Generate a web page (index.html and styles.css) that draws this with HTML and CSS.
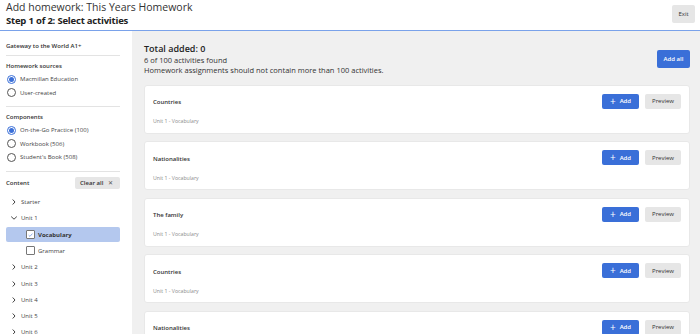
FILE: index.html
```html
<!DOCTYPE html>
<html>
<head>
<meta charset="utf-8">
<link rel="stylesheet" href="styles.css">
</head>
<body>
<header class="top">
  <div class="titles">
    <div class="t1">Add homework: This Years Homework</div>
    <div class="t2">Step 1 of 2: Select activities</div>
  </div>
  <button class="btn-grey exit">Exit</button>
</header>
<div class="layout">
  <aside class="side">
    <div class="course">Gateway to the World A1+</div>
    <div class="group">
      <div class="gtitle">Homework sources</div>
      <label class="radio on"><span class="dot"></span>Macmillan Education</label>
      <label class="radio"><span class="dot"></span>User-created</label>
    </div>
    <div class="group">
      <div class="gtitle">Components</div>
      <label class="radio on"><span class="dot"></span>On-the-Go Practice (100)</label>
      <label class="radio"><span class="dot"></span>Workbook (506)</label>
      <label class="radio"><span class="dot"></span>Student's Book (508)</label>
    </div>
    <div class="content-head">
      <div class="gtitle">Content</div>
      <button class="btn-grey clear">Clear all <span class="x">✕</span></button>
    </div>
    <ul class="tree">
      <li class="node"><svg class="chev" viewBox="0 0 8 8"><path d="M2.7 1.5 5 4 2.7 6.5" /></svg>Starter</li>
      <li class="node"><svg class="chev" viewBox="0 0 8 8"><path d="M1.2 2.6 4 5.2 6.8 2.6" /></svg>Unit 1</li>
      <li class="leaf sel"><span class="cb on"><svg viewBox="0 0 10 10"><path d="M2.3 5.2 4.2 7 7.8 3" /></svg></span>Vocabulary</li>
      <li class="leaf"><span class="cb"></span>Grammar</li>
      <li class="node"><svg class="chev" viewBox="0 0 8 8"><path d="M2.7 1.5 5 4 2.7 6.5" /></svg>Unit 2</li>
      <li class="node"><svg class="chev" viewBox="0 0 8 8"><path d="M2.7 1.5 5 4 2.7 6.5" /></svg>Unit 3</li>
      <li class="node"><svg class="chev" viewBox="0 0 8 8"><path d="M2.7 1.5 5 4 2.7 6.5" /></svg>Unit 4</li>
      <li class="node"><svg class="chev" viewBox="0 0 8 8"><path d="M2.7 1.5 5 4 2.7 6.5" /></svg>Unit 5</li>
      <li class="node"><svg class="chev" viewBox="0 0 8 8"><path d="M2.7 1.5 5 4 2.7 6.5" /></svg>Unit 6</li>
    </ul>
  </aside>
  <main class="main">
    <div class="summary">
      <div>
        <div class="total">Total added: 0</div>
        <div class="info">6 of 100 activities found</div>
        <div class="info">Homework assignments should not contain more than 100 activities.</div>
      </div>
      <button class="btn-blue addall">Add all</button>
    </div>
    <div class="cards">
      <div class="card"><div class="ctext"><div class="ctitle">Countries</div><div class="csub">Unit 1 - Vocabulary</div></div><div class="acts"><button class="btn-blue add"><span class="plus">+</span>Add</button><button class="btn-grey prev">Preview</button></div></div>
      <div class="card"><div class="ctext"><div class="ctitle">Nationalities</div><div class="csub">Unit 1 - Vocabulary</div></div><div class="acts"><button class="btn-blue add"><span class="plus">+</span>Add</button><button class="btn-grey prev">Preview</button></div></div>
      <div class="card"><div class="ctext"><div class="ctitle">The family</div><div class="csub">Unit 1 - Vocabulary</div></div><div class="acts"><button class="btn-blue add"><span class="plus">+</span>Add</button><button class="btn-grey prev">Preview</button></div></div>
      <div class="card"><div class="ctext"><div class="ctitle">Countries</div><div class="csub">Unit 1 - Vocabulary</div></div><div class="acts"><button class="btn-blue add"><span class="plus">+</span>Add</button><button class="btn-grey prev">Preview</button></div></div>
      <div class="card"><div class="ctext"><div class="ctitle">Nationalities</div><div class="csub">Unit 1 - Vocabulary</div></div><div class="acts"><button class="btn-blue add"><span class="plus">+</span>Add</button><button class="btn-grey prev">Preview</button></div></div>
    </div>
  </main>
</div>
</body>
</html>
```

FILE: styles.css
```css
* { box-sizing: border-box; }
html, body { margin: 0; padding: 0; height: 100%; overflow: hidden; }
body { font-family: "Open Sans", "Noto Sans", sans-serif; color: #222; background: #fff; }
button { font-family: inherit; border: none; cursor: pointer; }

.top {
  height: 31px;
  display: flex;
  justify-content: space-between;
  align-items: flex-start;
  padding: 0 5px 0 6px;
  border-bottom: 1px solid #7aa2ea;
}
.t1 { font-size: 10.5px; line-height: 14px; color: #333; }
.t2 { font-size: 9.5px; line-height: 14px; font-weight: 700; color: #222; letter-spacing: -0.2px; }
.btn-grey { background: #e6e6e6; color: #333; border-radius: 2px; }
.exit { width: 23px; height: 18px; font-size: 6px; padding: 0; margin-top: 5px; }

.layout { display: flex; height: calc(100% - 31px); }
.side { width: 132px; flex: none; padding: 0 12px 0 6px; background: #fff; }
.course { font-size: 6px; line-height: 10px; font-weight: 600; color: #333; padding: 10px 0 4px; border-bottom: 1px solid #e3e3e3; }
.group { border-bottom: 1px solid #e3e3e3; padding: 5.5px 0 7px; }
.gtitle { font-size: 6px; font-weight: 600; color: #333; line-height: 9px; margin-bottom: 2px; }
.radio { display: flex; align-items: center; gap: 4px; font-size: 6px; color: #444; height: 13.4px; padding-left: 1px; }
.dot { width: 9px; height: 9px; border-radius: 50%; border: 1px solid #555; flex: none; display: flex; align-items: center; justify-content: center; }
.radio.on .dot { border-color: #3a6fd8; }
.radio.on .dot::after { content: ""; width: 5px; height: 5px; border-radius: 50%; background: #3a6fd8; }

.content-head { display: flex; justify-content: space-between; align-items: center; padding-top: 5.5px; }
.content-head .gtitle { margin: 0; }
.clear { font-size: 6px; font-weight: 600; height: 12px; padding: 0 7px 0 5px; width: 45px; display: flex; align-items: center; justify-content: space-between; }
.clear .x { font-size: 5.5px; color: #555; font-weight: 400; }

.tree { list-style: none; margin: 4.5px 0 0; padding: 0; }
.tree li { display: flex; align-items: center; height: 16.3px; font-size: 6px; color: #444; }
.node { padding-left: 4px; gap: 3px; }
.chev { width: 8px; height: 8px; fill: none; stroke: #444; stroke-width: 1; }
.leaf { padding-left: 20px; gap: 3px; }
.leaf.sel { background: #b4c8ee; border-radius: 2px; font-weight: 700; color: #333; height: 15.5px; margin: 0.4px 0; }
.cb { width: 9px; height: 9px; border: 1px solid #777; border-radius: 1px; background: #fff; display: flex; align-items: center; justify-content: center; }
.cb svg { width: 8px; height: 8px; fill: none; stroke: #5b86dc; stroke-width: 1; }

.main { flex: 1; background: #f0f0f0; padding: 12px 10px 0 12px; overflow: hidden; }
.summary { display: flex; justify-content: space-between; align-items: flex-start; }
.total { font-size: 9px; font-weight: 600; color: #222; line-height: 12px; }
.info { font-size: 7.5px; color: #333; line-height: 10px; }
.btn-blue { background: #3a6fd8; color: #fff; border-radius: 2px; font-weight: 600; }
.addall { font-size: 6px; width: 33px; height: 18px; margin-top: 7px; }

.cards { display: flex; flex-direction: column; gap: 7.5px; margin-top: 9.5px; }
.card { background: #fff; border: 1px solid #e8e8e8; border-radius: 3px; height: 49px; display: flex; justify-content: space-between; align-items: flex-start; padding: 0 8px 0 8px; flex: none; }
.ctitle { font-size: 6px; font-weight: 600; color: #333; margin-top: 12.5px; line-height: 9px; }
.csub { font-size: 5.2px; color: #8a8a8a; margin-top: 10px; line-height: 8px; }
.acts { display: flex; gap: 6px; margin-top: 8px; }
.add { width: 37px; height: 15px; font-size: 6px; display: flex; align-items: center; justify-content: center; gap: 4px; padding: 0; }
.plus { font-size: 10px; font-weight: 400; line-height: 1; margin-top: -1px; }
.prev { width: 36px; height: 15px; font-size: 6px; padding: 0; }
```
